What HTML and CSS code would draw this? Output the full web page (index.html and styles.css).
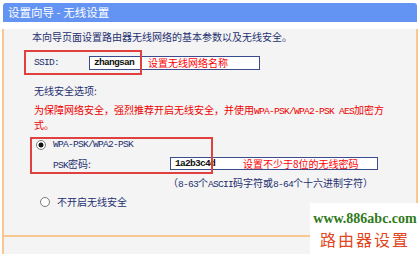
FILE: index.html
```html
<!DOCTYPE html>
<html lang="zh-CN">
<head>
  <meta charset="UTF-8">
  <title>设置向导 - 无线设置</title>
  <link rel="stylesheet" href="styles.css">
</head>
<body>

  <div class="panel">
    <div class="title">设置向导 - 无线设置</div>
    <div class="content">
      <p class="intro">本向导页面设置路由器无线网络的基本参数以及无线安全。</p>

      <div class="ssid-row">
        <span class="ssid-label mono">SSID:</span>
        <span class="field ssid-field">
          <span class="value mono">zhangsan</span>
          <span class="note ssid-note">设置无线网络名称</span>
        </span>
        <span class="mark ssid-mark"></span>
      </div>

      <p class="options-title">无线安全选项:</p>
      <p class="warning"><span>为保障网络安全，强烈推荐开启无线安全，并使用</span><span class="mono">WPA-PSK/WPA2-PSK AES</span><span>加密方</span><span>式。</span></p>

      <div class="wpa-group">
        <div class="radio-row">
          <span class="radio checked"></span>
          <span class="mono">WPA-PSK/WPA2-PSK</span>
        </div>
        <div class="psk-row">
          <span class="psk-label"><span class="mono">PSK</span>密码:</span>
          <span class="field psk-field">
            <span class="value mono">1a2b3c4d</span>
            <span class="note psk-note">设置不少于8位的无线密码</span>
          </span>
        </div>
        <span class="mark wpa-mark"></span>
      </div>

      <p class="hint">（<span class="mono">8-63</span>个<span class="mono">ASCII</span>码字符或<span class="mono">8-64</span>个十六进制字符）</p>

      <div class="radio-row off-row">
        <span class="radio"></span>
        <span>不开启无线安全</span>
      </div>
    </div>
    <div class="footer"></div>
  </div>

  <div class="watermark">
    <div class="site">www.886abc.com</div>
    <div class="brand">路由器设置</div>
  </div>

</body>
</html>
```

FILE: styles.css
```css
body {
  margin: 0;
  font-family: "Noto Sans CJK SC", sans-serif;
  font-size: 10px;
  color: #1f3070;
  background-color: #fff;
}
p {
  margin: 0;
}
.mono {
  font-family: "Liberation Mono", monospace;
  font-size: 9.6px;
  letter-spacing: -0.76px;
  line-height: 1;
}
.panel {
  position: relative;
  width: 416px;
  margin: 3px 0 0 2px;
}
.title {
  margin: 0 1px;
  height: 19px;
  line-height: 19px;
  padding-left: 5px;
  background-color: #6494f3;
  color: #fff;
  font-size: 11.5px;
  border-radius: 3px 3px 0 0;
}
.content {
  height: 206px;
  background-color: #f4f4f4;
  border-left: 2px solid #f8c792;
  border-right: 2px solid #f8c792;
}
.footer {
  height: 19px;
  background-color: #f4f4f4;
  border: 2px solid #f8c792;
}
.intro {
  margin: 7px 0 0 28px;
  line-height: 16px;
}
.ssid-row {
  position: relative;
  display: flex;
  align-items: center;
  height: 25px;
  margin-top: 5px;
}
.ssid-label {
  width: 55px;
  margin-left: 30px;
}
.field {
  display: flex;
  align-items: center;
  box-sizing: border-box;
  height: 14px;
  padding-left: 4px;
  border: 1px solid #3b4c8c;
  background-color: #fff;
}
.field .value {
  font-weight: bold;
  color: #111;
}
.note {
  color: #f00;
}
.ssid-field {
  width: 171px;
}
.ssid-note {
  margin-left: 14px;
}
.mark {
  position: absolute;
  box-sizing: border-box;
  border: 2px solid #e0403f;
}
.ssid-mark {
  left: 20px;
  top: 0;
  width: 118px;
  height: 25px;
}
.options-title {
  margin-top: 8px;
  padding-left: 30px;
  line-height: 16px;
}
.warning {
  width: 354px;
  margin: 3px 0 0 30px;
  line-height: 15px;
  color: #e00;
}
.wpa-group {
  position: relative;
  margin: 5px 0 0 26px;
  padding-bottom: 3px;
}
.radio-row {
  display: flex;
  align-items: center;
  height: 15px;
}
.radio {
  box-sizing: border-box;
  width: 10px;
  height: 10px;
  margin: 0 7px 0 6px;
  border: 1px solid #7a7a7a;
  border-radius: 50%;
  background-color: #fff;
}
.radio.checked {
  background: radial-gradient(circle, #111 0 2.2px, #fff 2.8px);
}
.psk-row {
  display: flex;
  align-items: center;
  height: 15px;
  margin-top: 4px;
  padding-left: 23px;
}
.psk-label {
  width: 117px;
}
.psk-field {
  width: 208px;
  height: 13px;
}
.psk-note {
  margin-left: 28px;
}
.wpa-mark {
  left: 0;
  top: 0;
  width: 183px;
  height: 37px;
}
.hint {
  margin: 1px 0 0 164px;
  line-height: 15px;
}
.off-row {
  margin: 4px 0 0 30px;
}
.watermark {
  position: absolute;
  right: 0;
  bottom: 0;
  width: 110px;
  height: 51px;
  background-color: #fff;
  text-align: center;
}
.site {
  margin-top: 8px;
  font-family: "Liberation Serif", serif;
  font-size: 14px;
  font-weight: bold;
  line-height: 16px;
  color: #2f7a1c;
}
.brand {
  margin-top: 2px;
  font-size: 16px;
  line-height: 20px;
  letter-spacing: 2px;
  color: #e2461c;
}
```
